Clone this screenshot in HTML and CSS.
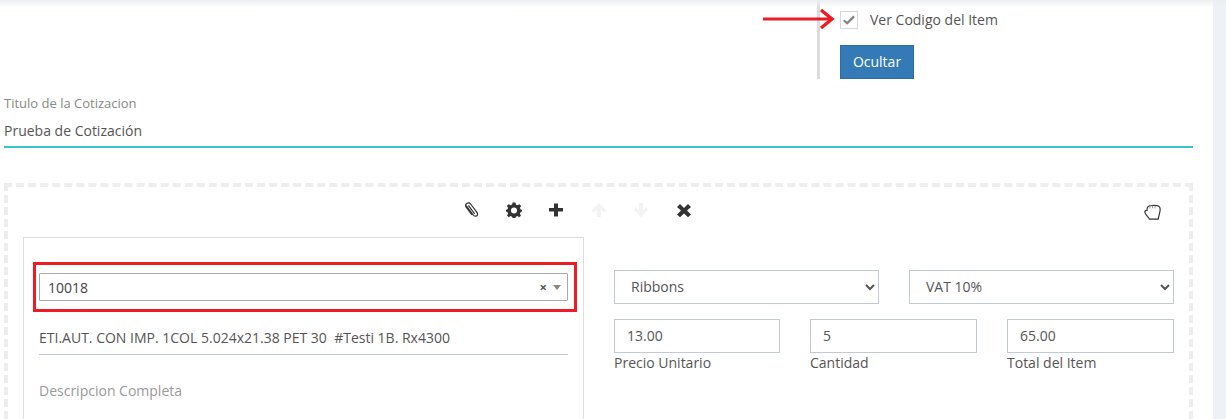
FILE: index.html

```html
<!DOCTYPE html>
<html lang="es">
<head>
    <meta charset="UTF-8">
    <title>Cotizacion</title>
    <link rel="stylesheet" href="styles.css">
</head>
<body>
    <div class="page">
        <div class="content">
            <div class="top-row">
                <div class="options">
                    <label class="check-row">
                        <span class="check-box">
                            <svg width="12" height="10" viewBox="0 0 12 10"><path d="M.8 5.2 L4.2 8.2 L11 1.4" fill="none" stroke="#808080" stroke-width="2.2"/></svg>
                        </span>
                        <span>Ver Codigo del Item</span>
                    </label>
                    <button class="btn-blue">Ocultar</button>
                </div>
            </div>

            <div class="title-field">
                <label class="title-label">Titulo de la Cotizacion</label>
                <div class="title-value">Prueba de Cotización</div>
            </div>

            <section class="item-box">
                <div class="toolbar">
                    <div class="toolbar-icons">
                        <svg class="icon" viewBox="0 0 16 16"><path d="M3.2 3.6 L10.2 13 C11.2 14.4 13.6 14.6 14.3 13.4 C15 12.2 14.6 11.4 13.8 10.2 L7.6 2 C6.6 .8 5 .6 3.8 1.4 C2.6 2.2 2.2 3.6 3 4.8 L9 13" fill="none" stroke="#333" stroke-width="1.2"/><path d="M5.4 3.4 L11.6 11.8" fill="none" stroke="#333" stroke-width="1.2"/></svg>
                        <svg class="icon" viewBox="0 0 16 16"><path fill="#333" fill-rule="evenodd" d="M6.6 .5 H9.4 L9.9 2.6 L11.5 3.3 L13.4 2.2 L15.1 4 L13.9 5.8 L14.6 7.4 L16 7.7 V9.6 L14.6 10.1 L13.9 11.8 L15 13.6 L13.3 15.2 L11.5 14.1 L9.9 14.8 L9.4 16 H6.6 L6.1 14.8 L4.5 14.1 L2.7 15.2 L1 13.6 L2.1 11.8 L1.4 10.1 L0 9.6 V7.7 L1.4 7.4 L2.1 5.8 L.9 4 L2.6 2.2 L4.5 3.3 L6.1 2.6 Z M8 5.4 A3 3 0 1 0 8 11.4 A3 3 0 1 0 8 5.4 Z"/></svg>
                        <svg class="icon" viewBox="0 0 16 16"><path fill="#333" d="M6 1.5 H10 V6 H15 V9.6 H10 V14.5 H6 V9.6 H1 V6 H6 Z"/></svg>
                        <svg class="icon" viewBox="0 0 16 16"><path fill="#f3f3f3" d="M8 1 L15.5 8.4 L13 10.8 L10 7.8 V15 H6 V7.8 L3 10.8 L.5 8.4 Z"/></svg>
                        <svg class="icon" viewBox="0 0 16 16"><path fill="#f3f3f3" d="M8 15 L15.5 7.6 L13 5.2 L10 8.2 V1 H6 V8.2 L3 5.2 L.5 7.6 Z"/></svg>
                        <svg class="icon" viewBox="0 0 16 16"><path fill="#333" d="M4 2 L8 6 L12 2 L15 5 L11 8.6 L15 12.4 L12 15.2 L8 11.4 L4 15.2 L1 12.4 L5 8.6 L1 5 Z"/></svg>
                    </div>
                    <svg class="icon-hand" viewBox="0 0 16 16"><path fill="none" stroke="#333" stroke-width="1.1" d="M.8 7.6 C.8 6.6 2 6 2.8 6 L3.2 3.4 C3.6 2 5 1.4 7 1.4 C9.4 1.2 12.6 1.2 14 2.2 C15.2 3 15.4 5 15 7 C14.6 9.4 13.8 11.4 13.4 14.2 L5 14.2 C4.2 12 .8 10 .8 7.6 Z"/><path fill="none" stroke="#888" stroke-width=".8" d="M5.6 2 V4.4 M8 1.4 V4 M10.4 1.6 V4.2"/></svg>
                </div>

                <div class="item-row">
                    <div class="item-card">
                        <div class="marked">
                            <div class="combo">
                                <span>10018</span>
                                <span class="combo-clear">×</span>
                                <span class="combo-arrow"></span>
                            </div>
                        </div>
                        <div class="line-field">ETI.AUT. CON IMP. 1COL 5.024x21.38 PET 30 &nbsp;#Testi 1B. Rx4300</div>
                        <div class="desc-field">Descripcion Completa</div>
                    </div>

                    <div class="item-right">
                        <div class="select-row">
                            <select class="field"><option>Ribbons</option></select>
                            <select class="field"><option>VAT 10%</option></select>
                        </div>
                        <div class="input-row">
                            <div>
                                <input class="field" value="13.00">
                                <label class="field-label">Precio Unitario</label>
                            </div>
                            <div>
                                <input class="field" value="5">
                                <label class="field-label">Cantidad</label>
                            </div>
                            <div>
                                <input class="field" value="65.00">
                                <label class="field-label">Total del Item</label>
                            </div>
                        </div>
                    </div>
                </div>
            </section>
        </div>
        <div class="side-strip"></div>
    </div>

    <!-- annotation arrow on top of the screenshot -->
    <svg class="red-arrow" width="72" height="20" viewBox="0 0 72 20"><path d="M0 10 H68" stroke="#ed1c24" stroke-width="3"/><path d="M58 1 L69 10 L58 19" fill="none" stroke="#ed1c24" stroke-width="3.4"/></svg>
    <div class="top-shadow"></div>
</body>
</html>
```

FILE: styles.css

```css
* {
    box-sizing: border-box;
}

html, body {
    margin: 0;
    height: 419px;
    overflow: hidden;
    background: #fff;
    font-family: 'Open Sans', sans-serif;
    font-size: 14px;
    color: #555;
}

.page {
    display: flex;
    height: 419px;
}

.content {
    width: 1189px;
    margin-left: 4px;
    flex: none;
}

.side-strip {
    width: 13px;
    margin-left: 20px;
    background: #eef1f6;
}

.top-shadow {
    position: absolute;
    top: 0;
    left: 0;
    right: 0;
    height: 7px;
    background: linear-gradient(#eceef1, rgba(255, 255, 255, 0));
}

.red-arrow {
    position: absolute;
    left: 763px;
    top: 9px;
}

.top-row {
    display: flex;
    height: 79px;
    padding-left: 813px;
}

.options {
    border-left: 3px solid #ddd;
    padding: 11px 0 0 20px;
    height: 79px;
}

.check-row {
    display: flex;
    align-items: center;
    gap: 12px;
    height: 18px;
    line-height: 18px;
}

.check-box {
    width: 18px;
    height: 18px;
    border: 1px solid #d8d8d8;
    display: flex;
    align-items: center;
    justify-content: center;
}

.btn-blue {
    display: block;
    margin-top: 16px;
    width: 74px;
    height: 34px;
    padding: 0 0 2px;
    background: #337ab7;
    border: 1px solid #2e6da4;
    color: #fff;
    font-family: inherit;
    font-size: 14px;
}

.title-field {
    height: 69px;
    padding-top: 16px;
    border-bottom: 2px solid #36c6d3;
}

.title-label {
    display: block;
    font-size: 13px;
    line-height: 17px;
    color: #888;
}

.title-value {
    margin-top: 9px;
    line-height: 20px;
}

.item-box {
    margin-top: 35px;
    height: 236px;
    border: 4px dashed #eee;
    border-bottom: none;
    padding: 0 15px;
}

.toolbar {
    position: relative;
    height: 50px;
    display: flex;
    align-items: center;
    justify-content: center;
    padding-bottom: 4px;
}

.toolbar-icons {
    display: flex;
    gap: 26.5px;
    margin-left: -42px;
}

.icon {
    width: 16px;
    height: 16px;
}

.icon-hand {
    position: absolute;
    right: 13px;
    top: 17px;
    width: 17px;
    height: 17px;
}

.item-row {
    display: flex;
    gap: 30px;
}

.item-card {
    width: 561px;
    height: 182px;
    border: 1px solid #ddd;
    border-bottom: none;
    padding: 24px 9px 0;
}

.marked {
    border: 3px solid #ed1c24;
    padding: 8px 6px 8px 3px;
    margin-right: -3px;
    height: 50px;
}

.combo {
    height: 28px;
    border: 1px solid #aaa;
    border-radius: 1px;
    display: flex;
    align-items: center;
    padding: 0 6px 0 8px;
    color: #444;
}

.combo span:first-child {
    flex: 1;
}

.combo-clear {
    font-weight: 700;
    color: #555;
    margin-right: 6px;
    font-size: 13px;
}

.combo-arrow {
    width: 0;
    height: 0;
    border-left: 4px solid transparent;
    border-right: 4px solid transparent;
    border-top: 5px solid #888;
}

.line-field {
    margin: 16px 6px 0 6px;
    height: 27px;
    line-height: 20px;
    border-bottom: 1px solid #c2cad8;
}

.desc-field {
    margin: 26px 6px 0 6px;
    line-height: 20px;
    color: #999;
}

.item-right {
    width: 560px;
    padding-top: 33px;
}

.select-row {
    display: grid;
    grid-template-columns: 1fr 1fr;
    gap: 30px;
}

.input-row {
    display: grid;
    grid-template-columns: 166px 167px 167px;
    gap: 30px;
    margin-top: 15px;
}

.field {
    display: block;
    width: 100%;
    height: 34px;
    border: 1px solid #c2cad8;
    border-radius: 0;
    background: #fff;
    color: #555;
    font-family: inherit;
    font-size: 14px;
    padding: 0 12px 2px;
}

.field-label {
    display: block;
    line-height: 20px;
}
```
